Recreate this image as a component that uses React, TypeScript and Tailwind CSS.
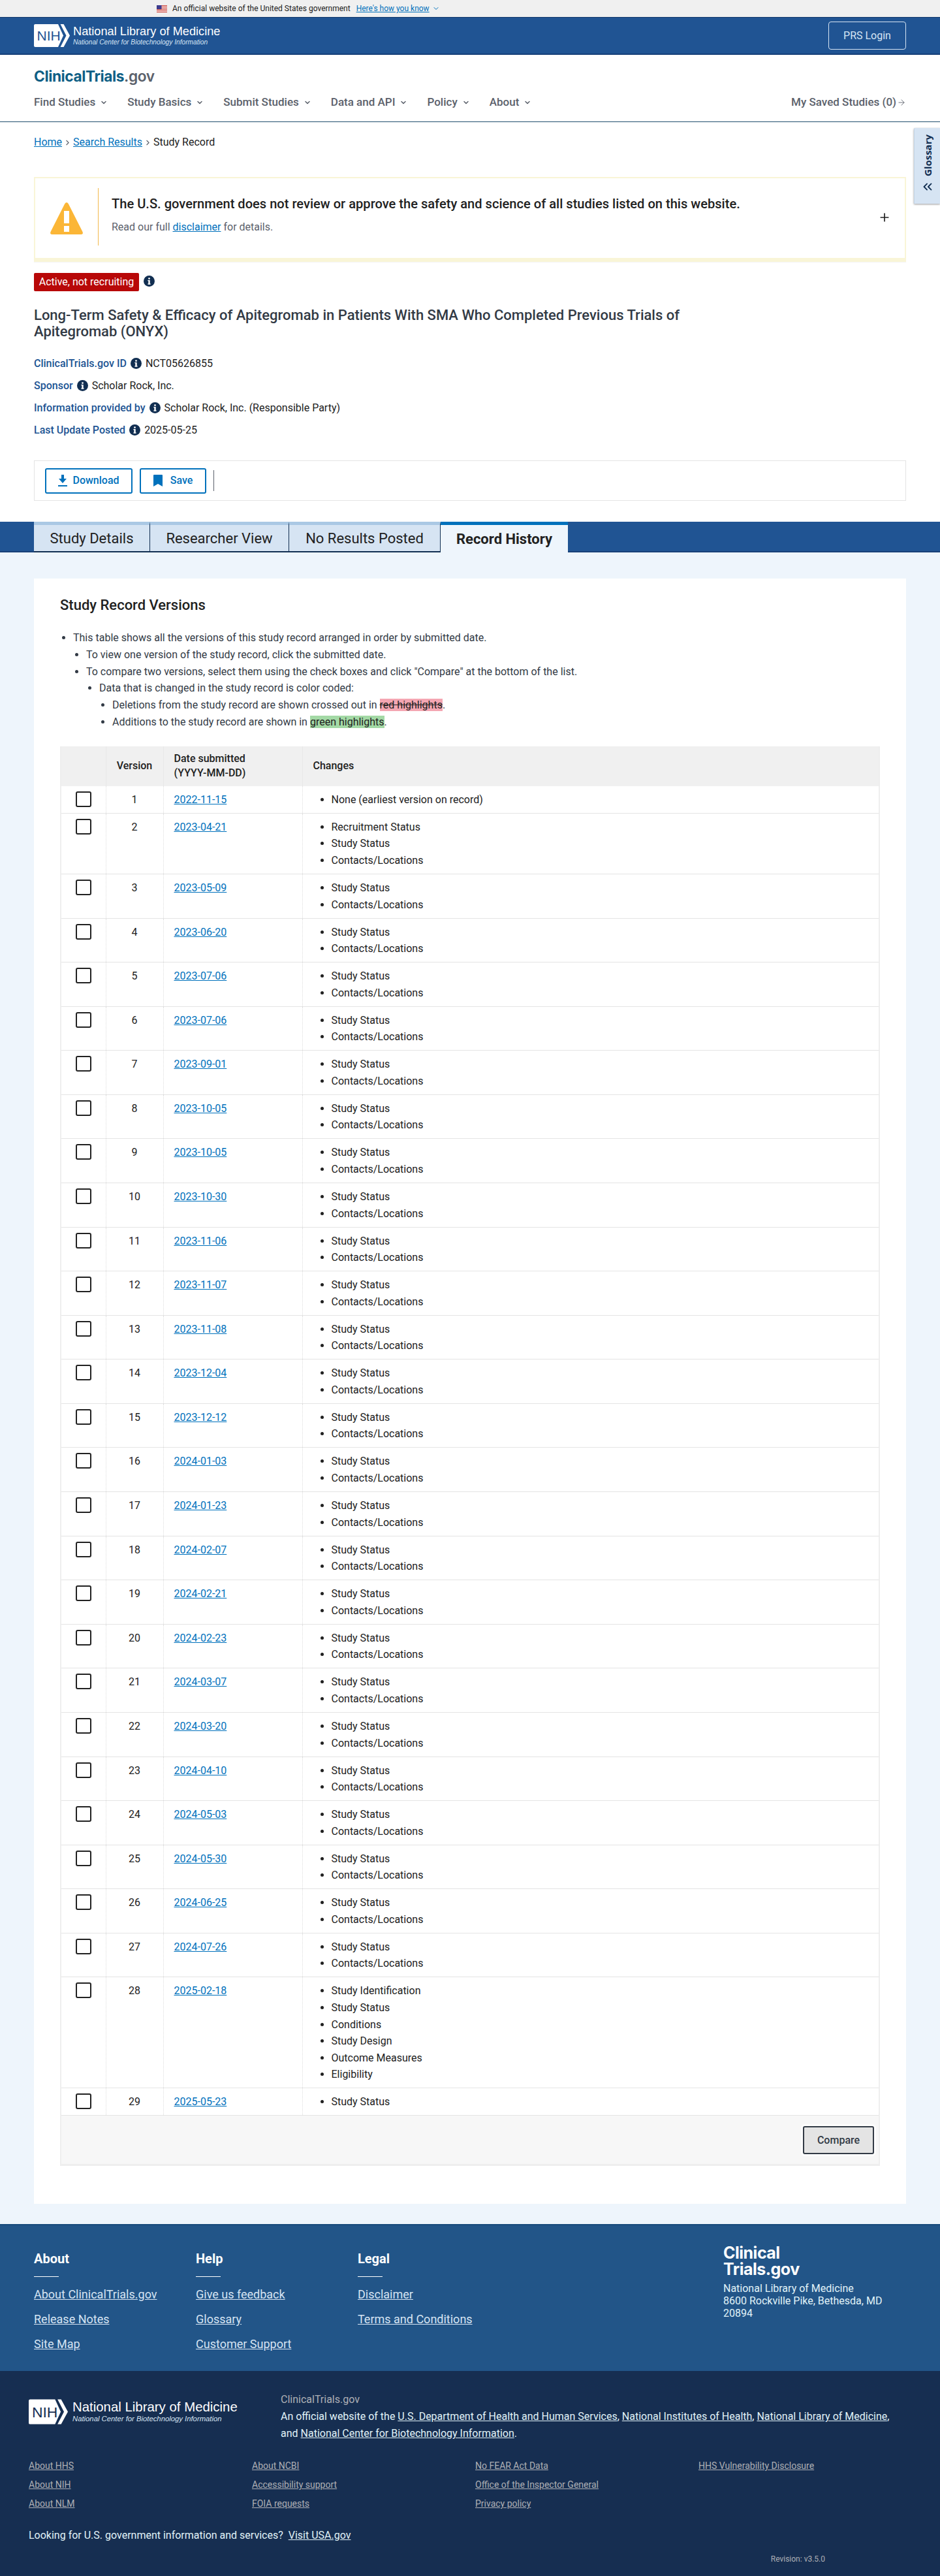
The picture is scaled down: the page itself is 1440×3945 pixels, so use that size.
import React from "react";
import { ChevronDown, ChevronRight, ChevronsLeft, ArrowRight, Plus } from "lucide-react";

const rows: [number, string, string[]][] = [];
const common = ["Study Status", "Contacts/Locations"];
const data: [string, string[]?][] = [
  ["2022-11-15", ["None (earliest version on record)"]],
  ["2023-04-21", ["Recruitment Status", ...common]],
  ["2023-05-09"], ["2023-06-20"], ["2023-07-06"], ["2023-07-06"], ["2023-09-01"],
  ["2023-10-05"], ["2023-10-05"], ["2023-10-30"], ["2023-11-06"], ["2023-11-07"],
  ["2023-11-08"], ["2023-12-04"], ["2023-12-12"], ["2024-01-03"], ["2024-01-23"],
  ["2024-02-07"], ["2024-02-21"], ["2024-02-23"], ["2024-03-07"], ["2024-03-20"],
  ["2024-04-10"], ["2024-05-03"], ["2024-05-30"], ["2024-06-25"], ["2024-07-26"],
  ["2025-02-18", ["Study Identification", "Study Status", "Conditions", "Study Design", "Outcome Measures", "Eligibility"]],
  ["2025-05-23", ["Study Status"]],
];
data.forEach((d, i) => rows.push([i + 1, d[0], d[1] ?? common]));

function Info() {
  return (
    <svg width="17" height="17" viewBox="0 0 17 17" className="inline-block shrink-0">
      <circle cx="8.5" cy="8.5" r="8.5" fill="#112e51" />
      <rect x="7.3" y="7" width="2.4" height="6.5" fill="#fff" />
      <rect x="6.3" y="7" width="2" height="1.2" fill="#fff" />
      <rect x="6.3" y="12.4" width="4.4" height="1.2" fill="#fff" />
      <circle cx="8.5" cy="4.6" r="1.4" fill="#fff" />
    </svg>
  );
}

function NihLogo({ w, h, fill }: { w: number; h: number; fill: string }) {
  return (
    <svg width={w} height={h} viewBox="0 0 55 35" className="shrink-0">
      <path d="M2 0 H37 L45 17.5 L37 35 H2 Q0 35 0 33 V2 Q0 0 2 0 Z" fill="#fff" />
      <path d="M40.5 0 H45.5 L55 17.5 L45.5 35 H40.5 L49.5 17.5 Z" fill="#fff" />
      <text x="4.5" y="25" fontSize="21" fontFamily="'Liberation Sans', sans-serif" fill={fill}>NIH</text>
    </svg>
  );
}

function Flag() {
  return (
    <svg width="16" height="11" viewBox="0 0 16 11" className="shrink-0">
      <rect width="16" height="11" fill="#fff" />
      {[0, 2, 4, 6, 8, 10].map((y) => (
        <rect key={y} y={y} width="16" height="1" fill="#c8382f" />
      ))}
      <rect width="7.5" height="6" fill="#3c3b8e" />
    </svg>
  );
}

function NavItem({ label }: { label: string }) {
  return (
    <span className="flex items-center gap-[7px]">
      <span>{label}</span>
      <ChevronDown size={12} strokeWidth={3} />
    </span>
  );
}

function Meta({ label, value }: { label: string; value: string }) {
  return (
    <div className="flex h-[34px] items-center gap-[6px]">
      <span className="font-medium text-[#205493]">{label}</span>
      <span className="relative -top-[1px] flex"><Info /></span>
      <span className="text-[#212121]">{value}</span>
    </div>
  );
}

function Tab({ label, w }: { label: string; w: number }) {
  return (
    <div
      style={{ width: w }}
      className="flex h-[47px] items-center justify-center border-t-[5px] border-r-[1px] border-b-[2px] border-t-[#aac8e4] border-r-[#112e51] border-b-[#112e51] bg-[#d6e4f3] text-[22px] text-[#212121]"
    >
      {label}
    </div>
  );
}

function FooterCol({ title, links }: { title: string; links: string[] }) {
  return (
    <div className="w-[248px]">
      <div className="text-[20px] leading-[24px] font-bold text-white">{title}</div>
      <div className="mt-[15px] h-[1px] w-[38px] bg-white" />
      <div className="mt-[15px] flex flex-col gap-[14px]">
        {links.map((l) => (
          <a key={l} className="text-[18px] leading-[24px] text-[#d6e4f3] underline">{l}</a>
        ))}
      </div>
    </div>
  );
}

function SmallLinks({ links }: { links: string[] }) {
  return (
    <div className="flex flex-col">
      {links.map((l) => (
        <div key={l} className="h-[29px] text-[14px] leading-[29px]">
          <a className="text-[#aeb0b5] underline">{l}</a>
        </div>
      ))}
    </div>
  );
}

export default function App() {
  return (
    <div className="relative w-[1440px] bg-white font-['Roboto',sans-serif] text-[16px] text-[#212121]">
      {/* Government banner */}
      <div className="flex h-[26px] items-center bg-[#f0f0f0] pl-[240px] text-[12px] text-[#212121]">
        <Flag />
        <span className="ml-[8px]">An official website of the United States government</span>
        <a className="ml-[9px] text-[#0071bc] underline">Here's how you know</a>
        <ChevronDown size={12} strokeWidth={2} className="ml-[4px] text-[#0071bc]" />
      </div>

      {/* Header */}
      <div className="flex h-[58px] items-center justify-between border-t-[1px] border-b-[2px] border-t-[#12386b] border-b-[#174078] bg-[#205493] pr-[52px] pl-[52px]">
        <div className="flex items-center gap-[5px]">
          <NihLogo w={55} h={35} fill="#205493" />
          <div className="font-['Liberation_Sans',sans-serif] text-white">
            <div className="text-[18.2px] leading-[21px]">National Library of Medicine</div>
            <div className="text-[10.2px] leading-[12px] text-[#d6e4f3] italic">National Center for Biotechnology Information</div>
          </div>
        </div>
        <a className="flex h-[43px] w-[119px] items-center justify-center rounded-[4px] border-[1px] border-[#d6e4f3] text-[#d6e4f3]">PRS Login</a>
      </div>

      {/* Site nav */}
      <div className="border-b-[1px] border-[#1f4e6d] px-[52px] pt-[21px] pb-[15px]">
        <div className="font-['Inter',sans-serif] text-[22.7px] leading-[24px] font-bold tracking-[-0.4px] text-[#0e5f85]">
          ClinicalTrials<span className="font-semibold text-[#5b616b]">.gov</span>
        </div>
        <div className="mt-[14px] flex h-[28px] items-center justify-between text-[17px] font-medium text-[#5b616b]">
          <div className="flex items-center gap-[30px]">
            <NavItem label="Find Studies" />
            <NavItem label="Study Basics" />
            <NavItem label="Submit Studies" />
            <NavItem label="Data and API" />
            <NavItem label="Policy" />
            <NavItem label="About" />
          </div>
          <span className="flex items-center">My Saved Studies (0)<ArrowRight size={14} strokeWidth={1.5} className="ml-[1px]" /></span>
        </div>
      </div>

      {/* Glossary tab */}
      <div className="absolute top-[196px] right-0 flex h-[116px] w-[40px] flex-col items-center rounded-tl-[2px] border-l-[1px] border-[#c4d4e6] bg-[#d6e4f3] pt-[10px] shadow-[0_1px_3px_rgba(0,0,0,0.4)]">
        <span className="rotate-180 font-['Open_Sans',sans-serif] text-[15px] leading-[20px] font-bold text-[#112e51] [writing-mode:vertical-rl]">Glossary</span>
        <ChevronsLeft size={22} strokeWidth={2} className="mt-[5px] text-[#112e51]" />
      </div>

      {/* Study head */}
      <div className="px-[52px]">
        <div className="flex h-[24px] items-center pt-0 leading-[24px] mt-[19px]">
          <a className="text-[#0071bc] underline">Home</a>
          <ChevronRight size={13} className="mx-[2px] text-[#5b616b]" />
          <a className="text-[#0071bc] underline">Search Results</a>
          <ChevronRight size={13} className="mx-[2px] text-[#5b616b]" />
          <span>Study Record</span>
        </div>

        <div className="mt-[41px] flex h-[130px] w-[1336px] border-x-[2px] border-t-[2px] border-b-[6px] border-[#f9f5d7] shadow-[0_1px_1px_rgba(0,0,0,0.04)]">
          <div className="flex w-[96px] items-center justify-center">
            <svg width="52" height="52" viewBox="0 0 52 52">
              <path d="M26 2 Q28 2 29 4.5 L50.5 47 Q52 51 48 51 H4 Q0 51 1.5 47 L23 4.5 Q24 2 26 2 Z" fill="#fbb637" />
              <rect x="22" y="15" width="8" height="19" fill="#fff" />
              <rect x="22" y="38" width="8" height="9" fill="#fff" />
            </svg>
          </div>
          <div className="mt-[15px] h-[88px] w-[1px] bg-[#f2b94c]" />
          <div className="ml-[20px] flex-1 pt-[27px]">
            <div className="text-[20.1px] leading-[24px] font-medium text-[#212121]">The U.S. government does not review or approve the safety and science of all studies listed on this website.</div>
            <div className="mt-[12px] leading-[24px] text-[#5b616b]">Read our full <a className="text-[#0071bc] underline">disclaimer</a> for details.</div>
          </div>
          <div className="flex w-[48px] items-start pt-[50px] pl-[7px] text-[#212121]"><Plus size={20} strokeWidth={2} /></div>
        </div>

        <div className="mt-[17px] flex items-start gap-[7px]">
          <span className="flex h-[28px] w-[161px] items-center justify-center rounded-[2px] bg-[#b80808] text-white">Active, not recruiting</span>
          <span className="mt-[4px] flex"><Info /></span>
        </div>

        <h1 className="mt-[24px] w-[1040px] text-[22px] leading-[25px] font-medium text-[#323a45]">
          Long-Term Safety &amp; Efficacy of Apitegromab in Patients With SMA Who Completed Previous Trials of Apitegromab (ONYX)
        </h1>

        <div className="mt-[20px]">
          <Meta label="ClinicalTrials.gov ID" value="NCT05626855" />
          <Meta label="Sponsor" value="Scholar Rock, Inc." />
          <Meta label="Information provided by" value="Scholar Rock, Inc. (Responsible Party)" />
          <Meta label="Last Update Posted" value="2025-05-25" />
        </div>

        <div className="mt-[29px] flex h-[62px] w-[1336px] items-center border-[1px] border-[#e4e4e4] pl-[16px]">
          <button className="flex h-[39px] w-[134px] items-center justify-center gap-[8px] rounded-[3px] border-[2px] border-[#0071bc] font-medium text-[#0071bc]">
            <svg width="14" height="20" viewBox="0 0 14 20"><path d="M5 1 H9 V7 H13 L7 14 L1 7 H5 Z" fill="#0071bc" /><rect x="0" y="17" width="14" height="2" fill="#0071bc" /></svg>
            Download
          </button>
          <button className="ml-[11px] flex h-[39px] w-[102px] items-center justify-center gap-[12px] rounded-[3px] border-[2px] border-[#0071bc] font-medium text-[#0071bc]">
            <svg width="14" height="18" viewBox="0 0 14 18"><path d="M0 1 Q0 0 1 0 H13 Q14 0 14 1 V18 L7 14 L0 18 Z" fill="#0071bc" /></svg>
            Save
          </button>
          <div className="ml-[11px] h-[32px] w-[1px] bg-[#5b616b]" />
        </div>
      </div>

      {/* Tabs */}
      <div className="mt-[32px] flex h-[47px] border-b-[2px] border-[#174078] bg-[#205493] pl-[52px]">
        <Tab label="Study Details" w={178} />
        <Tab label="Researcher View" w={213} />
        <Tab label="No Results Posted" w={232} />
        <div className="z-10 flex h-[47px] w-[195px] items-center justify-center border-t-[5px] border-t-[#0071bc] bg-[#eef5fc] text-[22px] font-bold text-[#212121]">Record History</div>
      </div>

      {/* Main */}
      <div className="bg-[#eef5fc] px-[52px] pt-[40px] pb-[31px]">
        <div className="w-[1336px] bg-white px-[40px] pt-[27px] pb-[58px]">
          <h2 className="text-[22px] leading-[28px] font-medium text-[#212121]">Study Record Versions</h2>
          <ul className="mt-[23px] list-disc pl-[20px] leading-[25.8px] text-[#323a45]">
            <li>This table shows all the versions of this study record arranged in order by submitted date.
              <ul className="list-disc pl-[20px]">
                <li>To view one version of the study record, click the submitted date.</li>
                <li>To compare two versions, select them using the check boxes and click "Compare" at the bottom of the list.
                  <ul className="list-disc pl-[20px]">
                    <li>Data that is changed in the study record is color coded:
                      <ul className="list-disc pl-[20px]">
                        <li>Deletions from the study record are shown crossed out in <span className="bg-[#f4a6b2] text-[#212121] line-through">red highlights</span>.</li>
                        <li>Additions to the study record are shown in <span className="bg-[#a3d9a5] text-[#212121]">green highlights</span>.</li>
                      </ul>
                    </li>
                  </ul>
                </li>
              </ul>
            </li>
          </ul>

          <div className="mt-[24px] border-x-[2px] border-[#eeeeee]">
            <table className="w-full table-fixed border-collapse text-[#212121]">
              <colgroup>
                <col className="w-[68px]" />
                <col className="w-[88px]" />
                <col className="w-[213px]" />
                <col />
              </colgroup>
              <thead>
                <tr className="h-[61px] bg-[#f0f0f0] text-left font-medium">
                  <th className="border-r-[1px] border-[#e8e8e8]" />
                  <th className="border-r-[1px] border-[#e8e8e8] text-center font-medium">Version</th>
                  <th className="border-r-[1px] border-[#e8e8e8] px-[16px] leading-[22px] font-medium">Date submitted<br />(YYYY-MM-DD)</th>
                  <th className="px-[16px] font-medium">Changes</th>
                </tr>
              </thead>
              <tbody>
                {rows.map(([n, date, items]) => (
                  <tr key={n} className="border-b-[1px] border-[#e4e4e4] align-top leading-[25.6px]">
                    <td className="border-r-[1px] border-dotted border-[#dddddd] pt-[8px] pb-[7.4px]">
                      <div className="flex justify-center">
                        <input type="checkbox" className="h-[24px] w-[24px] appearance-none rounded-[3px] border-[2px] border-[#212121] bg-white" />
                      </div>
                    </td>
                    <td className="border-r-[1px] border-dotted border-[#dddddd] pt-[8px] pb-[7.4px] text-center">{n}</td>
                    <td className="border-r-[1px] border-dotted border-[#dddddd] px-[16px] pt-[8px] pb-[7.4px]">
                      <a className="text-[#0071bc] underline">{date}</a>
                    </td>
                    <td className="px-[16px] pt-[8px] pb-[7.4px]">
                      <ul className="list-disc pl-[28px]">
                        {items.map((t, i) => <li key={i}>{t}</li>)}
                      </ul>
                    </td>
                  </tr>
                ))}
              </tbody>
            </table>
            <div className="flex h-[77px] items-start justify-end border-b-[3px] border-[#eeeeee] bg-[#f7f7f7] pt-[16px] pr-[7px]">
              <button className="flex h-[43px] w-[109px] items-center justify-center rounded-[3px] border-[2px] border-[#323a45] bg-[#e4e4e4] font-medium text-[#323a45] ring-[3px] ring-white/70">Compare</button>
            </div>
          </div>
        </div>
      </div>

      {/* Footer */}
      <div className="flex h-[225px] border-t-[2px] border-[#174a7c] bg-[#225588] pt-[39px] pl-[52px]">
        <FooterCol title="About" links={["About ClinicalTrials.gov", "Release Notes", "Site Map"]} />
        <FooterCol title="Help" links={["Give us feedback", "Glossary", "Customer Support"]} />
        <div className="w-[560px]">
          <FooterCol title="Legal" links={["Disclaimer", "Terms and Conditions"]} />
        </div>
        <div className="-mt-[9px] w-[280px]">
          <div className="font-['Inter',sans-serif] text-[25px] leading-[25px] font-bold tracking-[-0.5px] text-white">Clinical<br />Trials.gov</div>
          <div className="mt-[7px] leading-[19px] text-[#e1f3f8]">National Library of Medicine<br />8600 Rockville Pike, Bethesda, MD<br />20894</div>
        </div>
      </div>

      <div className="h-[316px] bg-[#162e51] px-[44px] pt-[31px]">
        <div className="flex">
          <div className="flex w-[386px] items-start gap-[7px] pt-[12px]">
            <NihLogo w={60} h={39} fill="#162e51" />
            <div className="font-['Liberation_Sans',sans-serif] text-white">
              <div className="text-[20.4px] leading-[24px]">National Library of Medicine</div>
              <div className="text-[11.3px] leading-[13px] text-[#d6e4f3] italic">National Center for Biotechnology Information</div>
            </div>
          </div>
          <div className="leading-[26px] text-white">
            <div className="text-[#aeb0b5]">ClinicalTrials.gov</div>
            <div className="text-[#e1f3f8]">
              An official website of the <a className="underline">U.S. Department of Health and Human Services</a>, <a className="underline">National Institutes of Health</a>, <a className="underline">National Library of Medicine</a>,<br />
              and <a className="underline">National Center for Biotechnology Information</a>.
            </div>
          </div>
        </div>
        <div className="mt-[22px] grid grid-cols-[342px_342px_342px_342px] gap-0">
          <SmallLinks links={["About HHS", "About NIH", "About NLM"]} />
          <SmallLinks links={["About NCBI", "Accessibility support", "FOIA requests"]} />
          <SmallLinks links={["No FEAR Act Data", "Office of the Inspector General", "Privacy policy"]} />
          <SmallLinks links={["HHS Vulnerability Disclosure"]} />
        </div>
        <div className="mt-[22px] leading-[24px] text-[#e1f3f8]">
          Looking for U.S. government information and services?<a className="ml-[8px] underline">Visit USA.gov</a>
        </div>
        <div className="mt-[16px] flex justify-end pr-[132px] text-[12px] leading-[16px] text-[#aeb0b5]">Revision: v3.5.0</div>
      </div>
    </div>
  );
}
